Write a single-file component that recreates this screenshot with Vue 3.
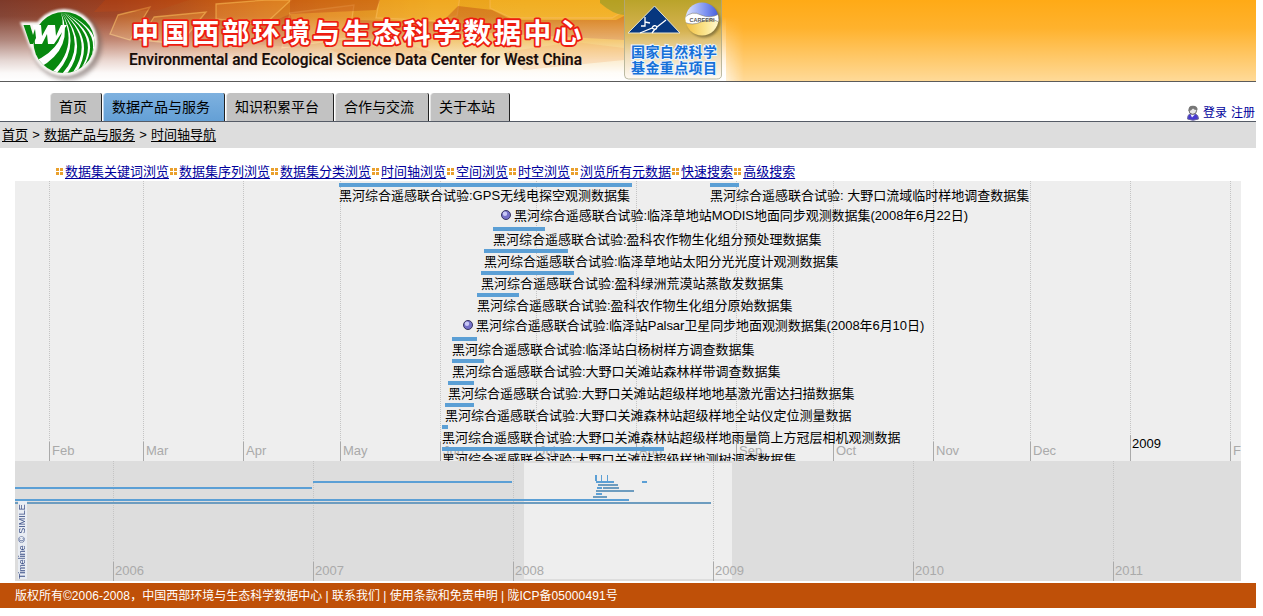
<script setup>
const tabs = [
  { t: '首页', w: 52 },
  { t: '数据产品与服务', w: 122, on: true },
  { t: '知识积累平台', w: 108 },
  { t: '合作与交流', w: 94 },
  { t: '关于本站', w: 80 },
]
const crumbs = ['首页', '数据产品与服务', '时间轴导航']
const links = ['数据集关键词浏览', '数据集序列浏览', '数据集分类浏览', '时间轴浏览', '空间浏览', '时空浏览', '浏览所有元数据', '快速搜索', '高级搜索']
const months = [
  [34, 'Feb'], [128, 'Mar'], [228, 'Apr'], [325, 'May'], [425, 'Jun'], [521, 'Jul'], [621, 'Aug'],
  [721, 'Sep'], [818, 'Oct'], [918, 'Nov'], [1015, 'Dec'], [1115, '2009'], [1215, 'F'],
]
const years = [[98, 2006], [298, 2007], [498, 2008], [698, 2009], [898, 2010], [1098, 2011]]
const p = '黑河综合遥感联合试验:'
const events = [
  [324, 2, 293, 'GPS无线电探空观测数据集'],
  [695, 2, 29, ' 大野口流域临时样地调查数据集'],
  [478, 46, 52, '盈科农作物生化组分预处理数据集'],
  [469, 68, 84, '临泽草地站太阳分光光度计观测数据集'],
  [466, 90, 93, '盈科绿洲荒漠站蒸散发数据集'],
  [462, 112, 42, '盈科农作物生化组分原始数据集'],
  [437, 156, 25, '临泽站白杨树样方调查数据集'],
  [437, 178, 32, '大野口关滩站森林样带调查数据集'],
  [433, 200, 26, '大野口关滩站超级样地地基激光雷达扫描数据集'],
  [430, 222, 29, '大野口关滩森林站超级样地全站仪定位测量数据'],
  [427, 244, 6, '大野口关滩森林站超级样地雨量筒上方冠层相机观测数据'],
  [427, 266, 222, '大野口关滩站超级样地测树调查数据集'],
]
const instants = [
  [486, 24, '临泽草地站MODIS地面同步观测数据集(2008年6月22日)'],
  [448, 134, '临泽站Palsar卫星同步地面观测数据集(2008年6月10日)'],
]
// x, y, width, height, muted
const mini = [
  [298, 20, 199, 2], [0, 26, 297, 2], [0, 38, 614, 2], [0, 41, 696, 2, 1],
  [580, 14, 2, 6], [586, 14, 1, 6], [592, 14, 1, 6], [581, 20, 18, 2], [627, 20, 5, 2],
  [583, 23, 20, 2, 1], [582, 26, 5, 2], [588, 26, 16, 2, 1], [581, 29, 38, 2, 1],
  [581, 32, 6, 2], [578, 35, 14, 2, 1],
]
const px = (x, y, w, h) => ({ left: x + 'px', top: y + 'px', width: w + 'px', height: h + 'px' })
</script>

<template>
  <div class="page">
    <header class="banner">
      <svg width="1256" height="81" viewBox="0 0 1256 81">
        <defs>
          <linearGradient id="right" x2="0" y2="1"><stop offset="0" stop-color="#ffaa16" /><stop offset=".35" stop-color="#ffb22d" /><stop offset="1" stop-color="#ffda98" /></linearGradient>
          <linearGradient id="left"><stop offset="0" stop-color="#7d3a2a" /><stop offset=".16" stop-color="#9c3d1c" /><stop offset=".3" stop-color="#c45a14" /><stop offset=".45" stop-color="#dd8517" /><stop offset=".6" stop-color="#eaa31c" /><stop offset=".85" stop-color="#eea71a" /><stop offset="1" stop-color="#ffaa16" /></linearGradient>
          <linearGradient id="fade" x2="0" y2="1"><stop offset="0" stop-color="#fff" stop-opacity="0" /><stop offset=".2" stop-color="#fff" stop-opacity=".06" /><stop offset=".5" stop-color="#fff" stop-opacity=".4" /><stop offset=".75" stop-color="#fff" stop-opacity=".8" /><stop offset=".9" stop-color="#fff" stop-opacity=".97" /><stop offset="1" stop-color="#fff" /></linearGradient>
          <linearGradient id="edge"><stop offset="0" stop-color="#fff" stop-opacity=".75" /><stop offset="1" stop-color="#fff" stop-opacity="0" /></linearGradient>
          <linearGradient id="down" x2="0" y2="1"><stop offset=".2" stop-color="#000" /><stop offset="1" stop-color="#fff" /></linearGradient>
          <mask id="low"><rect x="640" width="120" height="81" fill="url(#down)" /></mask>
          <linearGradient id="plate" x2="0" y2="1"><stop offset="0" stop-color="#b9a329" /><stop offset=".4" stop-color="#d6b352" /><stop offset=".7" stop-color="#efdcb6" /><stop offset="1" stop-color="#fffaf3" /></linearGradient>
          <linearGradient id="sky"><stop offset="0" stop-color="#e6ecff" /><stop offset=".6" stop-color="#7d92f2" /><stop offset="1" stop-color="#3f57d8" /></linearGradient>
          <linearGradient id="sand"><stop offset="0" stop-color="#f1bd3c" /><stop offset=".6" stop-color="#fbe58e" /><stop offset="1" stop-color="#fffbd8" /></linearGradient>
          <filter id="blur" x="-30%" y="-30%" width="160%" height="160%"><feGaussianBlur stdDeviation="2.2" /></filter>
          <filter id="glow" x="-30%" y="-30%" width="160%" height="160%"><feGaussianBlur stdDeviation=".8" /></filter>
          <clipPath id="disc"><circle cx="64" cy="42.500" r="30.500" /></clipPath>
          <clipPath id="globe"><circle cx="702" cy="19" r="16.500" /></clipPath>
        </defs>
        <rect width="1256" height="81" fill="url(#right)" />
        <rect width="726" height="81" fill="url(#left)" />
        <g fill="#f39a35" fill-opacity=".32" stroke="#f9b850" stroke-opacity=".6" stroke-width="1.3">
          <path d="M118 15 150 7 130 40 110 34ZM154 17l52-5-26 32-40-4ZM216 4l50-4h25l-27 25-48-6ZM290 13l64-8-5 33-67 10Z" />
          <path d="M380-4l-4 22 60 3 21-5 3-20Z" fill="#fbb62b" />
          <path d="M490-4v12l22 10h100l24-14V-4Z" fill="#fcc02e" />
        </g>
        <path d="M105 0h84l-30 10-65 2ZM290 0h90l-4 10-86 4ZM262 26l28-12 12 34-50-4ZM350 20l100 2 25 12-130 6ZM458 6l34 4 20 10h104l8-4v24l-190-10Z" fill="#b9430f" opacity=".42" />
        <path d="M600 0h24v15q-10 0-24-12Z" fill="#9b9a23" opacity=".7" />
        <rect width="726" height="81" fill="url(#fade)" />
        <path d="M505 52l70-10 49 6v12l-100 10ZM330 49l80-4 40 13-90 8Z" fill="#f3a765" opacity=".25" />
        <g mask="url(#low)"><rect x="722" width="22" height="81" fill="url(#edge)" /></g>

        <circle cx="67" cy="45" r="35" fill="#6c5f5c" opacity=".55" filter="url(#blur)" />
        <g fill="#f8f5f2" filter="url(#glow)"><circle cx="64" cy="42.500" r="33.500" /><path d="M20 22h22v26H30Z" /></g>
        <circle cx="64" cy="42.500" r="30.500" fill="#07880f" />
        <g clip-path="url(#disc)" fill="#fff">
          <path d="M61 12Q70 46 33 62l6 6Q75 48 61 12Z" />
          <path d="M61.500 12Q80 48 50 74h6Q82 46 61.500 12Z" />
          <path d="M62 12Q88 46 61 75h5Q90 44 62 12Z" />
          <path d="M62.500 12Q96 42 71 75h4Q98 40 62.500 12Z" />
          <path d="M63 12Q102 38 80 70l3-2Q104 36 63 12Z" />
          <path d="M64 12Q104 32 89 62l3-5Q106 32 64 12Z" />
        </g>
        <path d="M33 25h8l1 11 6-11h7l1 11 5-11h6L54 44h-6l-1-10-5 10h-7Z" fill="#fff" />
        <path d="M23.500 25H30l3 10 2-6 1 9-3 6h-3Z" fill="#07880f" />

        <text class="title" x="131.500" y="42.500" textLength="450">中国西部环境与生态科学数据中心</text>
        <text class="english" x="129" y="65" textLength="453" lengthAdjust="spacingAndGlyphs">Environmental and Ecological Science Data Center for West China</text>

        <path d="M624.500 -1V75q0 4 4 4h88q5 0 5-4V-1Z" fill="url(#plate)" stroke="#a6a58a" stroke-opacity=".75" />
        <path d="M654.500 6 680 33H628Z" fill="#07377f" stroke="#e9e6d0" />
        <path d="M645 17v9h-4m4-4 5 1m-10 10 12-5q2-4 5-1-1 4-5 1m5-1 9-7M652 33l3-4" fill="none" stroke="#fff" stroke-width="1.300" />
        <circle cx="704" cy="21" r="16.500" fill="#665b30" opacity=".65" filter="url(#glow)" />
        <g clip-path="url(#globe)">
          <rect x="684" width="36" height="20" fill="url(#sky)" />
          <rect x="684" y="19" width="36" height="18" fill="url(#sand)" />
          <path d="M684 18q8-8 17-3 9 4 18-1v8q-9-5-18 0-9 4-17 0Z" fill="#fff" stroke="#777" stroke-width=".6" />
        </g>
        <text x="702" y="21.500" class="career" textLength="25">CAREERI</text>
        <text class="fund" x="631" y="56.500" textLength="86">国家自然科学</text>
        <text class="fund" x="631" y="72.500" textLength="86">基金重点项目</text>
      </svg>
    </header>

    <nav class="nav">
      <div class="tabs">
        <a v-for="t in tabs" :key="t.t" class="tab" :class="{ on: t.on }" :style="{ width: t.w + 'px' }">{{ t.t }}</a>
      </div>
      <div class="user">
        <svg width="14" height="16" viewBox="0 0 14 16">
          <path d="M1.500 14Q1.500 9.500 4 9h5.500q3 1 3 5Q7 16.500 1.500 14Z" fill="#4639d0" stroke="#6f6c9e" />
          <path d="M4.500 9.500h4.500l-3 3Z" fill="#eef" />
          <circle cx="6.800" cy="5.500" r="3.800" fill="#e8e8e8" stroke="#666" />
          <path d="M2.500 6Q2 .5 7 .7T11.500 5Q8 5 7 3.500 5 6 2.500 6Z" fill="#777" />
        </svg>
        <a>登录</a><a>注册</a>
      </div>
    </nav>

    <div class="crumbs">
      <template v-for="(c, i) in crumbs" :key="c"><span v-if="i" class="sep">&gt;</span><a>{{ c }}</a></template>
    </div>

    <div class="links">
      <span v-for="l in links" :key="l" class="link"><i class="bullet"><b></b><b></b><b></b><b></b></i><a>{{ l }}</a></span>
    </div>

    <main class="timeline">
      <section class="band detail">
        <div v-for="m in months" :key="m[0]" class="mark" :class="{ year: m[1] === '2009' }" :style="{ left: m[0] + 'px' }"><span>{{ m[1] }}</span></div>
        <template v-for="e in events" :key="e[3]">
          <div class="tape" :style="px(e[0], e[1], e[2], 4)"></div>
          <div class="label" :style="{ left: e[0] + 'px', top: e[1] + 5 + 'px' }">{{ p + e[3] }}</div>
        </template>
        <div v-for="e in instants" :key="e[2]" class="instant" :style="{ left: e[0] + 'px', top: e[1] + 'px' }">
          <svg width="10" height="10" viewBox="0 0 10 10">
            <circle cx="5" cy="5" r="4.500" fill="#7570c8" stroke="#37345f" />
            <circle cx="4" cy="3.800" r="2.200" fill="#c9c8f5" />
          </svg>
          <span>{{ p + e[2] }}</span>
        </div>
      </section>
      <section class="band overview">
        <div class="window"></div>
        <div v-for="y in years" :key="y[0]" class="mark" :style="{ left: y[0] + 'px' }"><span>{{ y[1] }}</span></div>
        <div v-for="(m, i) in mini" :key="i" class="tape" :class="{ muted: m[4] }" :style="px(m[0], m[1], m[2], m[3])"></div>
        <div class="credit">Timeline © SIMILE</div>
      </section>
    </main>

    <footer class="footer"><span>版权所有©<span class="num">2006-2008</span>，中国西部环境与生态科学数据中心 | 联系我们 | 使用条款和免责申明 | 陇ICP备<span class="num">05000491</span>号</span></footer>
  </div>
</template>

<style>
html, body { background: #fff; overflow: hidden; }
</style>

<style scoped>
.page { width: 1256px; height: 616px; font: 13px/16px "Liberation Sans", "Noto Sans CJK SC", sans-serif; color: #000; }
.banner { height: 81px; border-bottom: 1px solid #5b5b5b; }
.banner svg { display: block; }
.title { font: bold 27.5px "Noto Sans CJK SC", sans-serif; fill: #fff; stroke: #ee1c10; stroke-width: 3.600px; paint-order: stroke; stroke-linejoin: round; }
.english { font: 500 16.200px Roboto, "Liberation Sans", sans-serif; fill: #160b08; stroke: #160b08; stroke-width: .2px; }
.career { font: bold 5.500px "Liberation Sans", sans-serif; fill: #555; text-anchor: middle; }
.fund { font: bold 14px "Noto Sans CJK SC", sans-serif; fill: #1670d8; stroke: #e9f5ff; stroke-width: 2px; paint-order: stroke; }
.nav { height: 39px; border-bottom: 1px solid #555b66; display: flex; justify-content: space-between; align-items: flex-end; }
.tabs { display: flex; gap: 1px; padding-left: 50px; }
.tab { box-sizing: border-box; height: 28px; padding-left: 8px; font-size: 14px; line-height: 28px; white-space: nowrap; background: #c2c2c2; border-right: 1px solid #222; border-left: 1px solid #e4e4e4; border-radius: 4px 2px 0 0; }
.tab.on { background: linear-gradient(#7eb1df, #64a0d6); border-left-color: #bcd6ee; }
.user { display: flex; align-items: center; gap: 4px; height: 17px; color: #00009c; }
.user svg { margin-right: -1px; }
.user a:last-child { margin-right: 1px; }
.user a { font-size: 12px; padding-top: 1px; }
.crumbs { display: flex; height: 26px; line-height: 26px; padding-left: 2px; background: #ddd; }
.crumbs a, .links a { text-decoration: underline; text-underline-offset: 2px; text-decoration-thickness: 1px; }
.crumbs .sep { width: 16px; text-align: center; }
.links { display: flex; gap: 1px; height: 33px; padding: 15px 0 0 56px; box-sizing: border-box; line-height: 17px; color: #00009c; white-space: nowrap; }
.link { display: flex; }
.bullet { display: grid; grid-template-columns: 3px 3px; grid-auto-rows: 3px; gap: 1px; width: 9px; padding-top: 5px; box-sizing: border-box; }
.bullet b { background: #eaa02c; }
.timeline { width: 1226px; margin-left: 15px; }
.band { position: relative; overflow: hidden; }
.detail { height: 280px; background: #eee; }
.overview { height: 120px; background: #ddd; color: #999; }
.mark { position: absolute; top: 0; bottom: 0; width: 1px; color: #aaa; background: repeating-linear-gradient(#c4c4c4 0 1px, transparent 1px 2px); }
.mark::after { content: ""; position: absolute; left: 0; bottom: 0; width: 1px; height: 19px; background: #aaa; }
.mark.year::after { height: 26px; }
.mark span { position: absolute; left: 3px; bottom: 2px; line-height: 16px; }
.detail .mark.year span { color: #000; bottom: 9px; left: 2px; }
.overview .mark span { left: 2px; bottom: 2px; }
.tape { position: absolute; background: #5b9fd5; }
.tape.muted { background: #6d9cbf; }
.label { position: absolute; white-space: pre; line-height: 16px; }
.instant { position: absolute; display: flex; align-items: center; gap: 3px; height: 20px; white-space: nowrap; letter-spacing: -.06px; }
.instant span { padding-top: 1px; }
.window { position: absolute; left: 509px; top: 2px; width: 208px; height: 116px; background: #eee; }
.credit { position: absolute; left: 3px; bottom: 2px; height: 78px; width: 9px; writing-mode: vertical-rl; text-orientation: sideways; transform: rotate(180deg); font-size: 9px; line-height: 9px; color: #3b4f86; background: #e9edf3; white-space: nowrap; }
.footer { margin-top: 2px; height: 25px; line-height: 26px; padding-left: 15px; background: #bf5008; color: #fff; font-size: 12px; white-space: nowrap; }
.num { letter-spacing: .1px; }
</style>
